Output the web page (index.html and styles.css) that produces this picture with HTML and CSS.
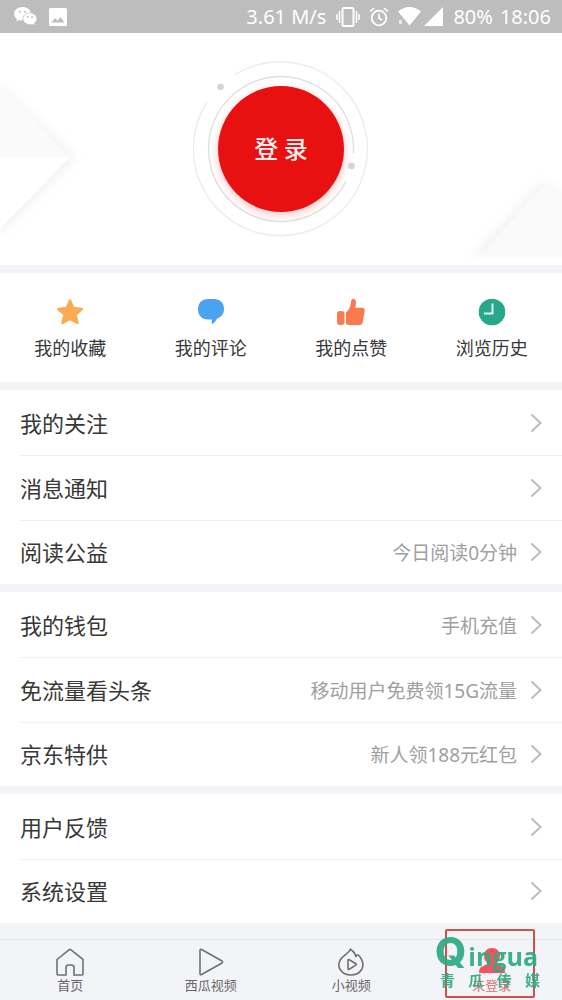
FILE: index.html
```html
<!DOCTYPE html>
<html lang="zh-CN">
<head>
<meta charset="utf-8">
<meta name="viewport" content="width=device-width, initial-scale=1">
<title>我的</title>
<link rel="stylesheet" href="styles.css">
</head>
<body>
<header class="status">
  <svg class="status-wechat" width="23" height="19" viewBox="0 0 23 19" aria-hidden="true">
    <path fill="#fff" d="M8.500 0C3.800 0 0 3 0 6.800 0 9 1.200 10.800 3 12l-.7 2.400L5 13a11 11 0 0 0 3.500.5C8 9 11 5.800 16.800 5.500 16 2.300 12.700 0 8.500 0Z"/>
    <path fill="#fff" d="M16 6.300c-3.800 0-6.700 2.400-6.700 5.500s3 5.500 6.700 5.500c.9 0 1.700-.1 2.400-.4l2.200 1.200-.6-2c1.600-1 2.600-2.500 2.600-4.300 0-3.100-3-5.500-6.600-5.500Z"/>
    <g fill="#bdbdbd"><circle cx="5.700" cy="4.800" r="1"/><circle cx="11" cy="4.800" r="1"/><circle cx="13.800" cy="10" r=".9"/><circle cx="18" cy="10" r=".9"/></g>
  </svg>
  <svg width="18" height="18" viewBox="0 0 18 18" aria-hidden="true">
    <rect width="18" height="18" rx="1.500" fill="#fff"/>
    <path fill="#bdbdbd" d="m2.500 14.500 3.500-4.500 2.500 2.800L11.500 9l4 5.500Z"/>
  </svg>
  <span class="status-speed">3.61 M/s</span>
  <svg width="24" height="20" viewBox="0 0 24 20" fill="none" stroke="#fff" aria-hidden="true">
    <rect x="6.500" y="1" width="11" height="18" rx="1.500" stroke-width="2"/>
    <path stroke-width="1.500" d="M3.500 4v12M20.500 4v12M1 7v6M23 7v6"/>
  </svg>
  <svg class="status-alarm" width="20" height="20" viewBox="0 0 20 20" fill="none" stroke="#fff" aria-hidden="true">
    <circle cx="10" cy="11" r="7.300" stroke-width="1.800"/>
    <path stroke-width="1.600" d="M10 6.500V11l3 2.200M1 4.500l4-3.300M19 4.500l-4-3.300"/>
  </svg>
  <svg class="status-wifi" width="23" height="19" viewBox="0 0 23 19" fill="#fff" aria-hidden="true">
    <path d="M0 4.500C7-1.500 16-1.500 23 4.500L11.500 18.500Z"/>
    <path d="M1 13h3v4H1z" opacity=".7"/>
  </svg>
  <svg width="19" height="19" viewBox="0 0 19 19" fill="#fff" aria-hidden="true"><path d="M19 0v19H0Z"/></svg>
  <span class="status-battery">80%</span>
  <time class="status-time">18:06</time>
</header>

<main>
  <section class="hero">
    <svg class="hero-left" width="110" height="190" viewBox="0 0 110 190" aria-hidden="true">
      <defs>
        <filter id="soft" x="-50%" y="-50%" width="200%" height="200%"><feGaussianBlur stdDeviation="6"/></filter>
      </defs>
      <path fill="#f0f0f0" filter="url(#soft)" d="M-70 85 0 14l75 70L0 160Z"/>
      <path fill="#fafafa" d="M0 12 70 84H0Z"/>
      <path fill="#fff" d="M0 84h70L0 156Z"/>
    </svg>
    <svg class="hero-right" width="130" height="110" viewBox="0 0 130 110" aria-hidden="true">
      <path fill="#efefef" filter="url(#soft)" d="M42 102 112 26l76 76Z"/>
      <path fill="#fafafa" d="M46 103 110 31q6-5 12 0l66 72Z"/>
      <path fill="#fff" d="M44 103h90v7H38Z"/>
    </svg>
    <div class="login-ring">
      <svg class="ring-art" viewBox="0 0 176 176" fill="none" aria-hidden="true">
        <path stroke="#ededed" stroke-width="1.500" d="M42 13.500A87 87 0 1 1 14 41"/>
        <path stroke="#dedede" stroke-width="1.300" d="M160.390 92A72.500 72.500 0 1 0 153.060 120"/>
        <circle cx="27.500" cy="26" r="3.300" fill="#d4d4d4"/>
        <circle cx="158.500" cy="105" r="3.300" fill="#d4d4d4"/>
      </svg>
      <button class="login" type="button">登 录</button>
    </div>
  </section>

  <nav class="quick" aria-label="快捷入口">
    <a class="quick-item" href="#">
      <svg width="28" height="28" viewBox="0 0 28 28" aria-hidden="true"><path fill="#fcaa54" stroke="#fcaa54" stroke-width="2.500" stroke-linejoin="round" d="m14 2.500 3.200 7.600 8.500.9-6.200 5.700 2 8.300-7.500-4-7.500 4 2-8.300L2.300 11l8.500-.9Z"/></svg>
      <span>我的收藏</span>
    </a>
    <a class="quick-item" href="#">
      <svg width="28" height="28" viewBox="0 0 28 28" aria-hidden="true"><path fill="#4aa2f0" d="M11 1h6c6 0 10 3.800 10 10 0 5-3 8.400-7 9.600-1 2.500-2.400 4-4.600 5.200-.7.200-1-.1-.8-.8l.5-3.600H11C5 21.400 1 17.500 1 11.200S5 1 11 1Z"/></svg>
      <span>我的评论</span>
    </a>
    <a class="quick-item" href="#">
      <svg width="28" height="28" viewBox="0 0 28 28" aria-hidden="true"><g fill="#fa7a50"><rect x="0" y="13" width="7.500" height="14" rx="3"/><path d="M9 14.500c3-2.500 4.500-6 5-10.500.3-4.500 5-4 5 .5 0 2-.4 3.700-.8 5.300H25c2 0 3 1.200 2.700 3l-2 11.500c-.3 1.800-1.500 2.700-3.200 2.700H11.800C10 27 9 26 9 24.300Z"/></g></svg>
      <span>我的点赞</span>
    </a>
    <a class="quick-item" href="#">
      <svg width="28" height="28" viewBox="0 0 28 28" aria-hidden="true"><circle cx="14" cy="14" r="13.300" fill="#27a88b"/><path fill="none" stroke="#dff5ef" stroke-width="2" d="M14.500 5.500v10H6"/></svg>
      <span>浏览历史</span>
    </a>
  </nav>

  <nav class="group" aria-label="消息">
    <a class="row" href="#"><span class="row-title">我的关注</span><svg class="chevron" viewBox="0 0 12 20"><path d="m1.500 1.500 9 8.500-9 8.500"/></svg></a>
    <a class="row" href="#"><span class="row-title">消息通知</span><svg class="chevron" viewBox="0 0 12 20"><path d="m1.500 1.500 9 8.500-9 8.500"/></svg></a>
    <a class="row" href="#"><span class="row-title">阅读公益</span><span class="row-value">今日阅读0分钟</span><svg class="chevron" viewBox="0 0 12 20"><path d="m1.500 1.500 9 8.500-9 8.500"/></svg></a>
  </nav>

  <nav class="group" aria-label="服务">
    <a class="row" href="#"><span class="row-title">我的钱包</span><span class="row-value">手机充值</span><svg class="chevron" viewBox="0 0 12 20"><path d="m1.500 1.500 9 8.500-9 8.500"/></svg></a>
    <a class="row" href="#"><span class="row-title">免流量看头条</span><span class="row-value">移动用户免费领15G流量</span><svg class="chevron" viewBox="0 0 12 20"><path d="m1.500 1.500 9 8.500-9 8.500"/></svg></a>
    <a class="row" href="#"><span class="row-title">京东特供</span><span class="row-value">新人领188元红包</span><svg class="chevron" viewBox="0 0 12 20"><path d="m1.500 1.500 9 8.500-9 8.500"/></svg></a>
  </nav>

  <nav class="group" aria-label="设置">
    <a class="row" href="#"><span class="row-title">用户反馈</span><svg class="chevron" viewBox="0 0 12 20"><path d="m1.500 1.500 9 8.500-9 8.500"/></svg></a>
    <a class="row" href="#"><span class="row-title">系统设置</span><svg class="chevron" viewBox="0 0 12 20"><path d="m1.500 1.500 9 8.500-9 8.500"/></svg></a>
  </nav>
</main>

<nav class="tabs" aria-label="主导航">
  <a class="tab" href="#">
    <svg width="30" height="28" viewBox="0 0 30 28" aria-hidden="true"><path d="M2 11.500 14 1.800q1-.8 2 0l12 9.700V26q0 1-1 1h-8v-7.500q0-2.500-2.500-2.500h-3Q11 17 11 19.500V27H3q-1 0-1-1Z"/></svg>
    <span>首页</span>
  </a>
  <a class="tab" href="#">
    <svg width="30" height="28" viewBox="0 0 30 28" aria-hidden="true"><path d="M4 2.500q0-1.800 1.600-1l20 11.300q2 1.200 0 2.400l-20 11.300q-1.600.8-1.600-1Z"/></svg>
    <span>西瓜视频</span>
  </a>
  <a class="tab" href="#">
    <svg width="30" height="28" viewBox="0 0 30 28" aria-hidden="true"><path d="M14.500 1.200C13 5 7 7.500 4.500 11.500 0 19 5.500 27 15 27s15-8.500 10-16.500Q23.500 7.500 22 7q-2-.3-2 2-1-5-5.500-7.800ZM12 12.500q0-1.500 1.300-.8l6.500 4q1 .8 0 1.500l-6.500 4q-1.300.7-1.300-.8Z"/></svg>
    <span>小视频</span>
  </a>
  <a class="tab tab-active" href="#">
    <svg width="30" height="28" viewBox="0 0 30 28" aria-hidden="true"><path d="M15 0c5 0 8 3.300 8 8 0 3-1.500 5.500-3.500 7v1l6.500 3q2 1.500 2 6H2q0-4.500 2-6l6.500-3v-1C8.500 13.500 7 11 7 8c0-4.700 3-8 8-8Z"/></svg>
    <span>未登录</span>
  </a>
  <div class="frame"></div>
  <div class="watermark">
    <div class="watermark-name"><span class="watermark-initial">Q</span>ingua</div>
    <div class="watermark-sub"><span>青</span><span>瓜</span><span>传</span><span>媒</span></div>
  </div>
</nav>
</body>
</html>
```

FILE: styles.css
```css
* {
  box-sizing: border-box;
}

body {
  margin: 0;
  min-height: 100vh;
  display: flex;
  flex-direction: column;
  background: #f3f4f8;
  color: #383838;
  font-family: "Noto Sans", "Noto Sans CJK SC", sans-serif;
}

a {
  color: inherit;
  text-decoration: none;
}

svg {
  display: block;
  flex: none;
}

.status {
  display: flex;
  align-items: center;
  height: 33px;
  padding: 0 11px 0 14px;
  background: #bdbdbd;
  color: #fff;
  font-size: 20px;
  line-height: 32px;
  white-space: nowrap;
}

.status-wechat {
  margin-right: 12px;
}

.status-speed {
  margin-left: auto;
  margin-right: 10px;
}

.status-alarm {
  margin: 0 9px;
}

.status-wifi {
  margin-right: 3px;
}

.status-battery {
  margin: 0 7px 0 10px;
}

main {
  display: flex;
  flex-direction: column;
  gap: 8px;
}

.hero {
  position: relative;
  display: flex;
  justify-content: center;
  height: 232px;
  padding-top: 28px;
  background: #fff;
  overflow: hidden;
}

.hero-left {
  position: absolute;
  left: 0;
  top: 40px;
}

.hero-right {
  position: absolute;
  right: 0;
  bottom: 0;
}

.login-ring {
  position: relative;
  display: grid;
  place-items: center;
  width: 176px;
  height: 176px;
}

.ring-art {
  position: absolute;
  inset: 0;
}

.login {
  position: relative;
  width: 126px;
  height: 126px;
  padding: 0 0 4px;
  border: 0;
  border-radius: 50%;
  background: #e81010;
  box-shadow: 0 3px 8px rgba(232, 16, 16, 0.25);
  color: #fff0ee;
  font-family: "Noto Sans CJK SC", sans-serif;
  font-size: 24px;
  font-weight: 500;
}

.quick {
  display: grid;
  grid-template-columns: repeat(4, 1fr);
  height: 109px;
  padding-top: 25px;
  background: #fff;
}

.quick-item {
  display: flex;
  flex-direction: column;
  align-items: center;
  gap: 10px;
  font-size: 18px;
  line-height: 24px;
}

.group {
  background: #fff;
}

.row {
  display: flex;
  align-items: center;
  height: 65px;
  padding: 0 20px;
}

.row:last-child {
  height: 64px;
}

.row + .row {
  background: linear-gradient(#f1f1f4, #f1f1f4) 20px 0 / 100% 1px no-repeat;
}

.row-title {
  padding-bottom: 2px;
  font-family: "Noto Sans CJK SC", sans-serif;
  font-size: 22px;
}

.row-value {
  margin-left: auto;
  color: #a0a0a0;
  font-size: 19px;
}

.chevron {
  width: 12px;
  height: 20px;
  margin-left: auto;
  fill: none;
  stroke: #bcbcbc;
  stroke-width: 2;
}

.row-value + .chevron {
  margin-left: 13px;
}

.tabs {
  position: relative;
  display: grid;
  grid-template-columns: repeat(4, 1fr);
  height: 61px;
  margin-top: auto;
  border-top: 1px solid #e6e7ea;
}

.tab {
  display: flex;
  flex-direction: column;
  align-items: center;
  padding-top: 8px;
  color: #666;
  font-size: 13px;
  line-height: 18px;
}

.tab path {
  fill: none;
  stroke: #707070;
  stroke-width: 1.6;
}

.tab-active {
  color: #e06c70;
}

.tab-active path {
  fill: #f8535c;
  stroke: none;
}

.frame {
  position: absolute;
  right: 27px;
  bottom: 2px;
  width: 90px;
  height: 69px;
  border: 2px solid #d0504a;
  border-radius: 2px;
}

.watermark {
  position: absolute;
  right: 22px;
  bottom: 12px;
  width: 105px;
  color: #2fab83;
  opacity: 0.93;
}

.watermark-name {
  display: flex;
  align-items: baseline;
  gap: 2px;
  font-family: "Open Sans", sans-serif;
  font-size: 25px;
  font-weight: 700;
  line-height: 32px;
}

.watermark-initial {
  font-family: Inter, sans-serif;
  font-size: 40px;
  font-weight: 800;
}

.watermark-sub {
  display: flex;
  justify-content: space-between;
  padding-left: 5px;
  font-size: 15px;
  font-weight: 700;
  line-height: 16px;
}
```
